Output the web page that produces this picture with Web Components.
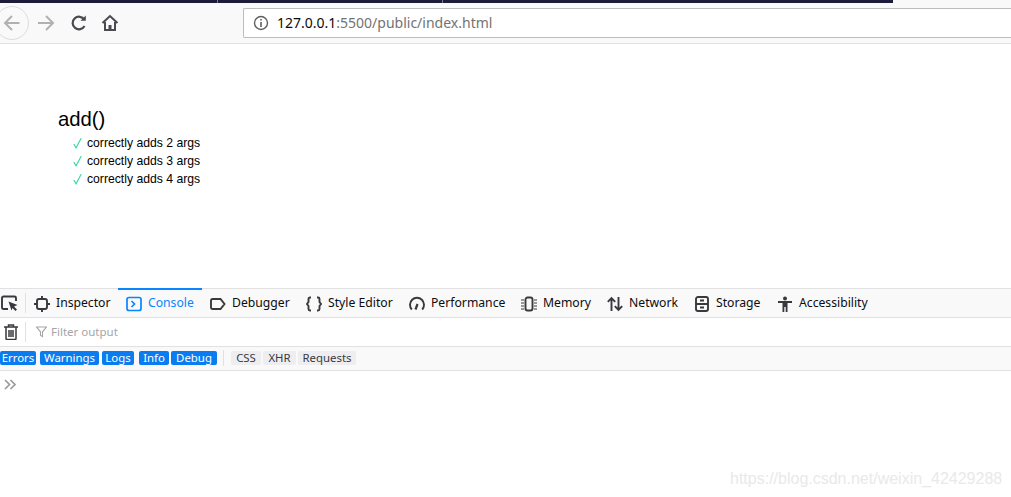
<!DOCTYPE html>
<html><head><meta charset="utf-8"><title>add()</title>
<style>html,body{margin:0;padding:0;background:#fff;height:497px;overflow:hidden}body{display:flex;flex-direction:column;width:1011px}</style>
</head><body>
<browser-chrome></browser-chrome>
<test-report></test-report>
<dev-tools></dev-tools>
<water-mark>https://blog.csdn.net/weixin_42429288</water-mark>
<script>
function def(name, html){customElements.define(name,class extends HTMLElement{constructor(){super();this.attachShadow({mode:'open'}).innerHTML=html}})}
const UI='"Noto Sans","Open Sans",sans-serif';
def('browser-chrome',`<style>
:host{display:block;height:44px;box-sizing:border-box;background:#f9f9fa;border-bottom:1px solid #e1e1e2;font-family:${UI}}
.strip{height:3px;display:flex}
.strip i{display:block;background:#1c1c3a;height:3px;border-right:1px solid #77778a;box-sizing:border-box}
.row{display:flex;align-items:center;height:40px}
.back{width:34px;height:34px;margin-left:-5px;border:1px solid #dcdcdc;border-radius:50%;box-sizing:border-box;background:#f9f9fa;flex:none;display:flex;align-items:center;justify-content:center}
svg{display:block;flex:none}
.url{margin-left:124px;flex:1;height:30px;box-sizing:border-box;margin-top:-1px;background:#fff;border:1px solid #bdbdbd;border-right:0;border-radius:2px 0 0 2px;display:flex;align-items:center;padding-left:9px;font-size:14px;color:#737373;white-space:nowrap}
.url b{font-weight:400;color:#0c0c0d}
.url span{margin-left:8px}
</style>
<div class="strip"><i style="width:218px"></i><i style="width:225px"></i><i style="width:450px;border:0"></i></div>
<div class="row">
<div class="back"><svg width="18" height="18" viewBox="0 0 18 18" fill="none" stroke="#b1b1b3" stroke-width="2"><path d="M16.500 9H2M9 2L2 9l7 7"/></svg></div>
<svg style="margin-left:8px" width="18" height="18" viewBox="0 0 18 18" fill="none" stroke="#b1b1b3" stroke-width="2"><path d="M1 9h14.500M9 2l7 7-7 7"/></svg>
<svg style="margin-left:15px" width="18" height="18" viewBox="0 0 18 18" fill="none" stroke="#4a4a4f" stroke-width="2.200"><path d="M14.500 12a6.300 6.300 0 1 1-.2-6.300"/><path d="M15.800 1.500v5.300h-5.300z" fill="#4a4a4f" stroke="none"/></svg>
<svg style="margin-left:13px" width="18" height="18" viewBox="0 0 18 18" fill="none" stroke="#4a4a4f" stroke-width="2"><path d="M1.500 9L9 2l7.500 7M4 8v8h10V8"/><path d="M7.500 16v-5h3v5z" fill="#4a4a4f" stroke="none"/></svg>
<div class="url"><svg width="16" height="16" viewBox="0 0 16 16" fill="none"><circle cx="8" cy="8" r="6.500" stroke="#5f5f5f" stroke-width="1.400"/><path d="M8 7v5M8 4v1.600" stroke="#5f5f5f" stroke-width="1.600"/></svg><span><b>127.0.0.1</b>:5500/public/index.html</span></div>
</div>`);
const CK='<svg width="9" height="11" viewBox="0 0 9 11" fill="none" stroke="#37d6a8" stroke-width="1.100"><path d="M.8 6L3 9.800 8.300 0"/></svg>';
def('test-report',`<style>
:host{display:block;height:244px;box-sizing:border-box;padding:63px 0 0 58px;font-family:"Liberation Sans",Arial,sans-serif;color:#000;background:#fff}
h1{margin:0 0 3px;font-size:20.300px;font-weight:400;line-height:24px}
ul{list-style:none;margin:0;padding:0 0 0 15px}
li{font-size:12.200px;height:18px;line-height:18px;display:flex;align-items:center;gap:5px}
svg{display:block}
</style><h1>add()</h1><ul>
<li>${CK}correctly adds 2 args</li>
<li>${CK}correctly adds 3 args</li>
<li>${CK}correctly adds 4 args</li>
</ul>`);
const S='fill="none" stroke="#38383d" stroke-width="1.900"';
const tab=(label,icon,w,cls='')=>`<div class="tab ${cls}" style="width:${w}px">${icon}<span>${label}</span></div>`;
def('dev-tools',`<style>
:host{display:block;flex:1;font-family:${UI};font-size:12.200px;color:#0c0c0d;background:#fff}
svg{display:block;flex:none}
.tabs{height:30px;box-sizing:border-box;border-top:1px solid #e1e1e2;border-bottom:1px solid #e1e1e2;background:#f9f9fa;display:flex;align-items:stretch}
.pick{width:26px;display:flex;align-items:center;justify-content:flex-start;padding-left:1px;border-right:1px solid #e1e1e2;margin:4px 0;box-sizing:border-box}
.tab{display:flex;align-items:center;gap:6px;box-sizing:border-box;padding-left:8px;white-space:nowrap;margin-top:-1px;border-top:2px solid transparent}
.tab span{position:relative;top:-1px}
.tab.on{border-top-color:#0a84ff;color:#0a84ff}
.filter{height:29px;box-sizing:border-box;border-bottom:1px solid #e1e1e2;background:#fff;display:flex;align-items:center}
.trash{width:26px;display:flex;justify-content:flex-start;padding-left:4px;align-items:center;height:20px;border-right:1px solid #e1e1e2;box-sizing:border-box}
.fo{display:flex;align-items:center;gap:4px;margin-left:10px;color:#a5a5a8;font-size:11.500px;line-height:14px;margin-top:-1px}
.chips{height:24px;box-sizing:border-box;border-bottom:1px solid #e1e1e2;padding-bottom:1px;background:#f9f9fa;display:flex;align-items:center;font-size:11.400px}
.c{height:14px;line-height:13px;background:#0a7cf0;color:#fff;border-radius:2px;display:block;text-align:center;flex:none}
.c.off{background:#eeeef0;color:#38383d}
.sep{width:1px;height:16px;background:#e1e1e2;margin:0 7px 0 6px}
.prompt{padding:8px 0 0 4px}
</style>
<div class="tabs">
<div class="pick"><svg width="18" height="17" viewBox="0 0 18 17" fill="none"><path d="M7 14H2.500A1.500 1.500 0 0 1 1 12.500V3a1.500 1.500 0 0 1 1.500-1.500h11A1.500 1.500 0 0 1 15 3v3" stroke="#38383d" stroke-width="1.900"/><path d="M7.500 6.500l9 3.500-3.500 1.500 3 3-1.500 1.500-3-3L10.500 15.500z" fill="#38383d"/></svg></div>
${tab('Inspector',`<svg width="16" height="16" viewBox="0 0 16 16" ${S}><rect x="3" y="3" width="10" height="10" rx="2"/><path d="M8 0v3M8 13v3M0 8h3M13 8h3"/></svg>`,92)}
${tab('Console',`<svg width="16" height="16" viewBox="0 0 16 16" fill="none" stroke="#0a84ff" stroke-width="1.700"><rect x="1" y="1.500" width="14" height="13" rx="2"/><path d="M5.500 5l3 3-3 3"/></svg>`,84,'on')}
${tab('Debugger',`<svg width="16" height="16" viewBox="0 0 16 16" ${S}><path d="M2.500 3h8l4 5-4 5h-8A1.500 1.500 0 0 1 1 11.500v-7A1.500 1.500 0 0 1 2.500 3z"/></svg>`,96)}
${tab('Style Editor',`<svg width="16" height="16" viewBox="0 0 16 16" ${S}><path d="M5 1.500H4A1.500 1.500 0 0 0 2.500 3v3L1 8l1.500 2v3A1.500 1.500 0 0 0 4 14.500h1M11 1.500h1A1.500 1.500 0 0 1 13.500 3v3L15 8l-1.500 2v3a1.500 1.500 0 0 1-1.500 1.500h-1"/></svg>`,103)}
${tab('Performance',`<svg width="16" height="16" viewBox="0 0 16 16" ${S}><path d="M2.800 13.500a7 7 0 1 1 10.400 0"/><path d="M6.500 13.500L8.500 8" stroke-width="2.200"/></svg>`,112)}
${tab('Memory',`<svg width="16" height="16" viewBox="0 0 16 16" ${S}><rect x="4.500" y="1.500" width="7" height="13" rx="2"/><path d="M0 4h3M0 7h3M0 10h3M0 13h3M13 4h3M13 7h3M13 10h3M13 13h3" stroke-width="1"/></svg>`,86)}
${tab('Network',`<svg width="16" height="16" viewBox="0 0 16 16" ${S}><path d="M4.500 15V2M.8 5.800l3.700-3.800 3.700 3.800M11.500 1v13M7.800 10.200l3.700 3.800 3.700-3.800"/></svg>`,87)}
${tab('Storage',`<svg width="16" height="16" viewBox="0 0 16 16" ${S}><rect x="2" y="1" width="12" height="14" rx="2"/><path d="M2 8h12M6 4.500h4M6 11.500h4"/></svg>`,83)}
${tab('Accessibility',`<svg width="16" height="16" viewBox="0 0 16 16" fill="#38383d"><circle cx="8" cy="2.500" r="2"/><path d="M1 5h14v2h-4.500v9H8.700V11H7.300v5H5.500V7H1z"/></svg>`,100)}
</div>
<div class="filter"><div class="trash"><svg width="14" height="16" viewBox="0 0 14 16" fill="none" stroke="#38383d" stroke-width="1.500"><path d="M0 3h14M4.500 3V1h5v2"/><path d="M2 3v11.500A1 1 0 0 0 3 15.500h8a1 1 0 0 0 1-1V3M5 6v7M7 6v7M9 6v7"/></svg></div>
<div class="fo"><svg width="11" height="12" viewBox="0 0 11 12" fill="none" stroke="#a5a5a8" stroke-width="1.100"><path d="M.6 1h9.800L6.500 5.800v4.700l-2-1V5.800z"/></svg><span>Filter output</span></div></div>
<div class="chips"><span class="c" style="width:36px">Errors</span><span class="c" style="width:59px;margin-left:4px">Warnings</span><span class="c" style="width:32px;margin-left:3px">Logs</span><span class="c" style="width:30px;margin-left:5px">Info</span><span class="c" style="width:46px;margin-left:2px">Debug</span><span class="sep"></span><span class="c off" style="width:30px">CSS</span><span class="c off" style="width:33px;margin-left:2px">XHR</span><span class="c off" style="width:58px;margin-left:2px">Requests</span></div>
<div class="prompt"><svg width="13" height="11" viewBox="0 0 13 11" fill="none" stroke="#9a9a9e" stroke-width="1.700"><path d="M1 1l4.500 4.500L1 10M6.500 1L11 5.500 6.500 10"/></svg></div>`);
def('water-mark',`<style>:host{position:absolute;left:730px;top:470px;font:16px "Liberation Sans",Arial,sans-serif;color:#e9e9e9;white-space:nowrap}</style><slot></slot>`);
</script>
</body></html>
